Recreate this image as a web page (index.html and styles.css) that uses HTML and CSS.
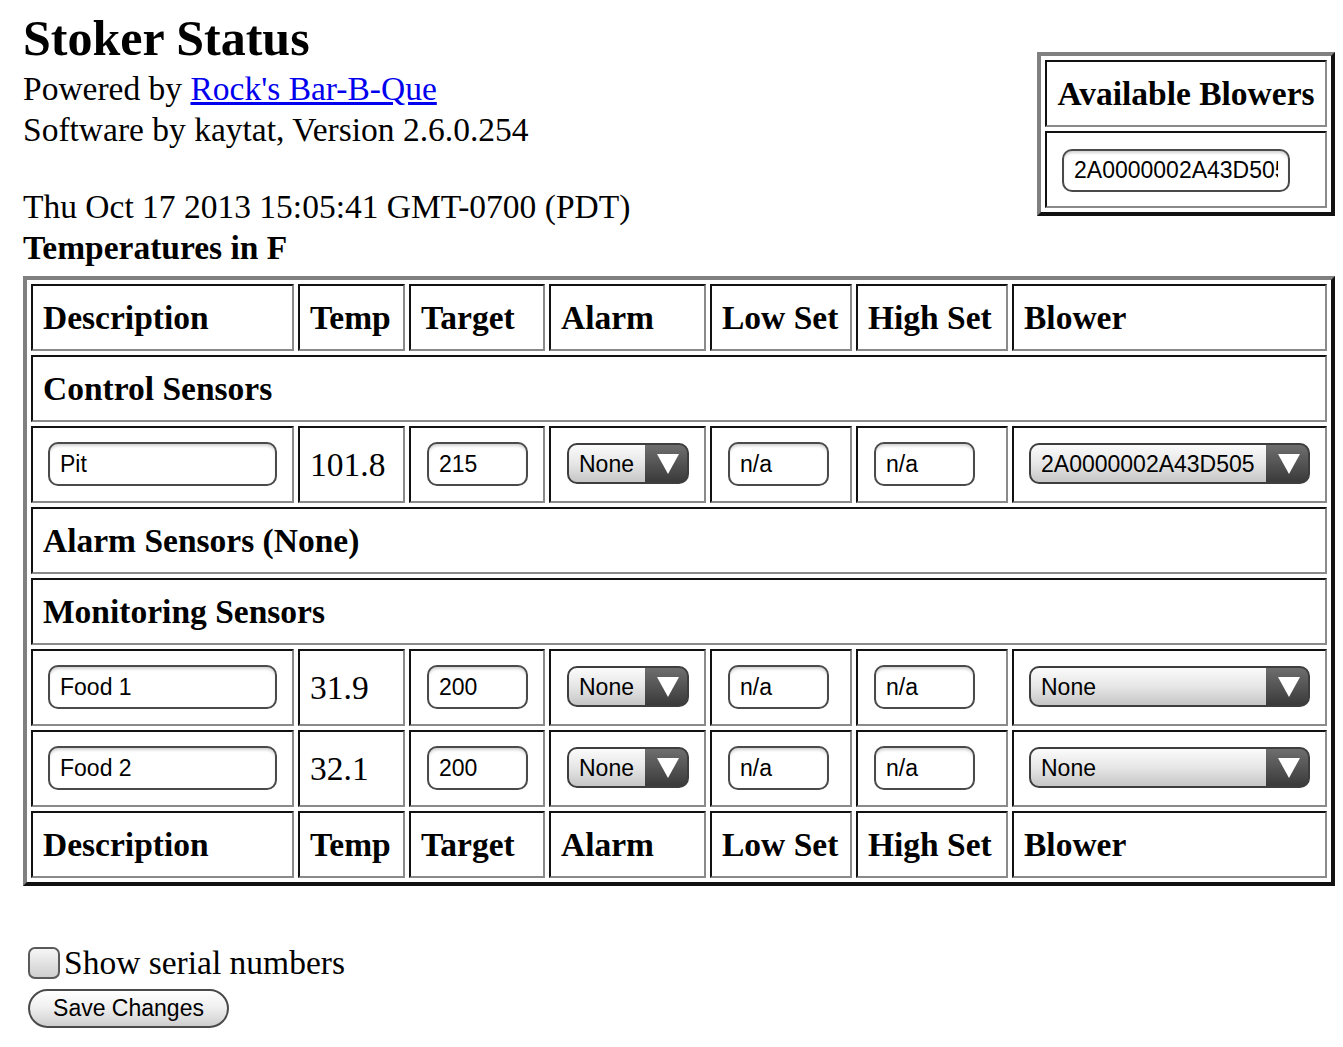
FILE: index.html
```html
<!DOCTYPE html>
<html>
<head>
<meta charset="utf-8">
<title>Stoker Status</title>
<link rel="stylesheet" href="styles.css">
</head>
<body>
<div class="page">
  <header class="top">
    <div class="intro">
      <h1 class="title">Stoker Status</h1>
      <div class="line">Powered by <a href="#">Rock's Bar-B-Que</a></div>
      <div class="line">Software by kaytat, Version 2.6.0.254</div>
      <div class="spacer"></div>
      <div class="line">Thu Oct 17 2013 15:05:41 GMT-0700 (PDT)</div>
      <div class="line bold">Temperatures in F</div>
    </div>
    <table class="grid blowers">
      <tr><th class="ab-head">Available Blowers</th></tr>
      <tr><td class="ctl"><input class="field f-ab" value="2A0000002A43D505"></td></tr>
    </table>
  </header>

  <table class="grid sensors">
    <colgroup>
      <col class="c-desc"><col class="c-temp"><col class="c-target"><col class="c-alarm"><col class="c-low"><col class="c-high"><col class="c-blower">
    </colgroup>
    <tr class="head">
      <th>Description</th><th>Temp</th><th>Target</th><th>Alarm</th><th>Low Set</th><th>High Set</th><th>Blower</th>
    </tr>
    <tr class="section"><th colspan="7">Control Sensors</th></tr>
    <tr class="data">
      <td class="ctl"><input class="field f-desc" value="Pit"></td>
      <td class="temp">101.8</td>
      <td class="ctl"><input class="field f-num" value="215"></td>
      <td class="ctl"><span class="sel s-alarm"><select><option>None</option></select></span></td>
      <td class="ctl"><input class="field f-num" value="n/a"></td>
      <td class="ctl"><input class="field f-num" value="n/a"></td>
      <td class="ctl"><span class="sel s-blower"><select><option>2A0000002A43D505</option><option>None</option></select></span></td>
    </tr>
    <tr class="section"><th colspan="7">Alarm Sensors (None)</th></tr>
    <tr class="section"><th colspan="7">Monitoring Sensors</th></tr>
    <tr class="data">
      <td class="ctl"><input class="field f-desc" value="Food 1"></td>
      <td class="temp">31.9</td>
      <td class="ctl"><input class="field f-num" value="200"></td>
      <td class="ctl"><span class="sel s-alarm"><select><option>None</option></select></span></td>
      <td class="ctl"><input class="field f-num" value="n/a"></td>
      <td class="ctl"><input class="field f-num" value="n/a"></td>
      <td class="ctl"><span class="sel s-blower"><select><option>None</option><option>2A0000002A43D505</option></select></span></td>
    </tr>
    <tr class="data">
      <td class="ctl"><input class="field f-desc" value="Food 2"></td>
      <td class="temp">32.1</td>
      <td class="ctl"><input class="field f-num" value="200"></td>
      <td class="ctl"><span class="sel s-alarm"><select><option>None</option></select></span></td>
      <td class="ctl"><input class="field f-num" value="n/a"></td>
      <td class="ctl"><input class="field f-num" value="n/a"></td>
      <td class="ctl"><span class="sel s-blower"><select><option>None</option><option>2A0000002A43D505</option></select></span></td>
    </tr>
    <tr class="head">
      <th>Description</th><th>Temp</th><th>Target</th><th>Alarm</th><th>Low Set</th><th>High Set</th><th>Blower</th>
    </tr>
  </table>

  <div class="options">
    <label class="check"><input type="checkbox" class="box"><span>Show serial numbers</span></label>
    <button class="save" type="button">Save Changes</button>
  </div>
</div>
</body>
</html>
```

FILE: styles.css
```css
html, body {
  margin: 0;
  padding: 0;
  background: #ffffff;
}

body {
  font-family: "Liberation Serif", "Times New Roman", serif;
  font-size: 33.5px;
  color: #000;
}

.page {
  padding: 0 8px 0 23px;
}

.top {
  display: flex;
  justify-content: space-between;
  align-items: flex-start;
}

.title {
  margin: 9px 0 0 0;
  font-size: 50px;
  line-height: 59px;
  font-weight: bold;
}

.line {
  line-height: 41px;
  white-space: nowrap;
}

.line a {
  color: #0000ee;
  text-decoration: underline;
}

.bold {
  font-weight: bold;
}

.spacer {
  height: 36px;
}

/* tables */
.grid {
  border-collapse: separate;
  border-spacing: 4px;
  border-style: solid;
  border-width: 4px;
  border-color: #808080 #111111 #111111 #808080;
}

.grid th,
.grid td {
  border-style: solid;
  border-width: 2px;
  border-color: #111111 #8a8a8a #8a8a8a #111111;
  padding: 10px;
  line-height: 43px;
  text-align: left;
  vertical-align: middle;
  font-weight: bold;
  white-space: nowrap;
}

.grid td {
  font-weight: normal;
}

.blowers {
  margin-top: 52px;
  width: 298px;
}

.ab-head {
  text-align: center !important;
}

.sensors {
  margin-top: 8px;
  width: 1312px;
  table-layout: fixed;
}

.c-desc { width: 263px; }
.c-temp { width: 107px; }
.c-target { width: 136px; }
.c-alarm { width: 157px; }
.c-low { width: 142px; }
.c-high { width: 152px; }
.c-blower { width: 315px; }

.grid td.ctl {
  line-height: 0;
}

.grid td.temp {
  line-height: 43px;
}

/* text inputs */
.field {
  display: block;
  box-sizing: border-box;
  height: 44px;
  margin: 4px 0 5px 6px;
  padding: 0 10px;
  border: 2px solid #4a4a4a;
  border-radius: 10px;
  background: #ffffff;
  box-shadow: inset 0 3px 3px -1px rgba(0, 0, 0, 0.18);
  font-family: "Liberation Sans", Arial, sans-serif;
  font-size: 23px;
  color: #000;
  outline: none;
}

.f-desc { width: 229px; margin-left: 5px; }
.f-num { width: 101px; }
.f-ab { width: 228px; height: 43px; margin: 6px 0 4px 5px; }

/* selects */
.sel {
  display: block;
  position: relative;
  margin: 5px 0 7px 6px;
  height: 41px;
}

.s-alarm { width: 122px; }
.s-blower { width: 281px; margin-left: 5px; }

.sel select {
  appearance: none;
  -webkit-appearance: none;
  display: block;
  box-sizing: border-box;
  width: 100%;
  height: 41px;
  margin: 0;
  padding: 0 44px 0 10px;
  border: 2px solid #3e3e3e;
  border-radius: 10px;
  background:
    linear-gradient(to bottom, #6e6e6e, #3a3a3a) right / 42px 100% no-repeat,
    linear-gradient(to bottom, #fbfbfb 0%, #e6e6e6 50%, #c6c6c6 100%);
  font-family: "Liberation Sans", Arial, sans-serif;
  font-size: 23px;
  color: #000;
  outline: none;
}

.sel::after {
  content: "";
  position: absolute;
  right: 10px;
  top: 11px;
  width: 0;
  height: 0;
  border-left: 11px solid transparent;
  border-right: 11px solid transparent;
  border-top: 20px solid #ffffff;
  pointer-events: none;
}

/* bottom options */
.options {
  margin-top: 56px;
}

.check {
  display: flex;
  align-items: center;
  line-height: 41px;
  white-space: nowrap;
}

.box {
  appearance: none;
  -webkit-appearance: none;
  box-sizing: border-box;
  width: 32px;
  height: 32px;
  margin: 0 4px 0 5px;
  border: 2px solid #5a5a5a;
  border-radius: 7px;
  background: linear-gradient(to bottom, #f6f6f6, #cfcfcf);
}

.save {
  display: block;
  box-sizing: border-box;
  width: 201px;
  height: 39px;
  margin: 6px 0 0 5px;
  padding: 0;
  border: 2px solid #4a4a4a;
  border-radius: 20px;
  background: linear-gradient(to bottom, #ffffff 0%, #f0f0f0 45%, #cfcfcf 100%);
  font-family: "Liberation Sans", Arial, sans-serif;
  font-size: 23px;
  color: #000;
}
```
